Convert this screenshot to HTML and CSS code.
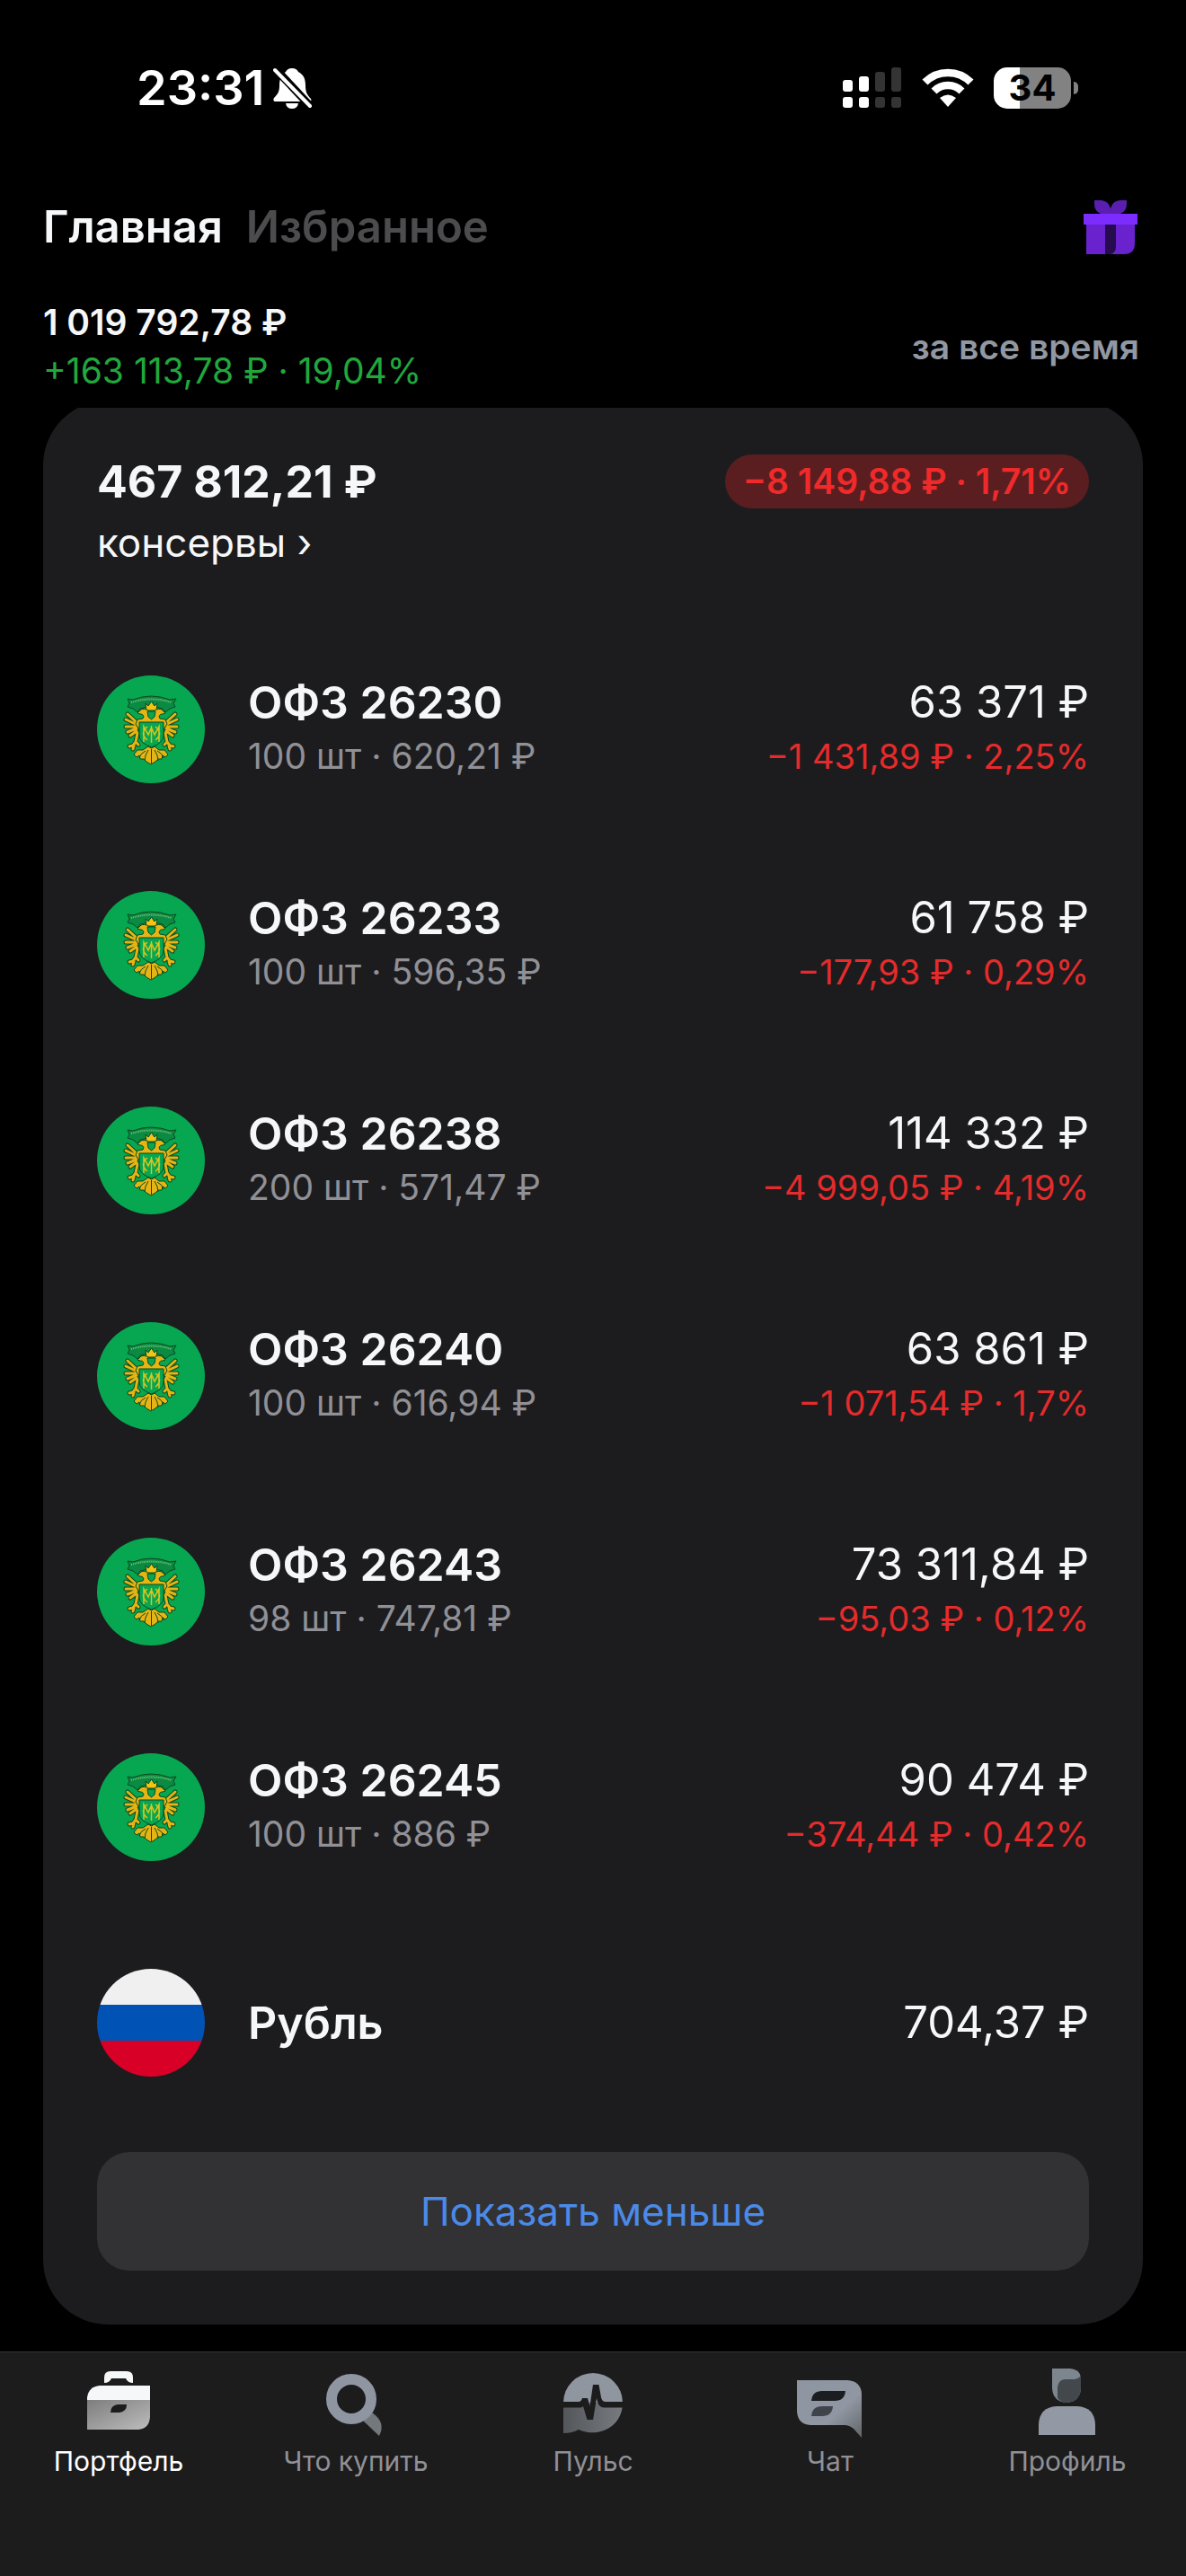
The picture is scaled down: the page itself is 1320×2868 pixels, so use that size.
FILE: index.html
```html
<!DOCTYPE html>
<html lang="ru">
<head>
<meta charset="utf-8">
<meta name="viewport" content="width=device-width, initial-scale=1">
<title>Портфель</title>
<link rel="stylesheet" href="styles.css">
</head>
<body>
<svg class="defs" aria-hidden="true">
  <symbol id="emblem" viewBox="0 0 120 120">
    <circle cx="60" cy="60" r="60" fill="#07a651"/>
    <g fill="none" stroke-linecap="round" stroke-linejoin="round">
      <path d="M46 54l-12-11M45 55l-13-6M44 57l-12 0M44 59l-10 4M44 62l-7 5M45 64l-2 10 3 3M43 74l-3 4-4 1M41 78l-1 4" stroke="#0a4a20" stroke-width="5"/>
      <path d="M46 54l-12-11M45 55l-13-6M44 57l-12 0M44 59l-10 4M44 62l-7 5M45 64l-2 10 3 3M43 74l-3 4-4 1M41 78l-1 4" stroke="#e6b414" stroke-width="3"/>
      <path d="M75 54l12-11M76 55l13-6M77 57l12 0M77 59l10 4M77 62l7 5M76 64l2 10-3 3M78 74l3 4 4 1M80 78l1 4" stroke="#0a4a20" stroke-width="5"/>
      <path d="M75 54l12-11M76 55l13-6M77 57l12 0M77 59l10 4M77 62l7 5M76 64l2 10-3 3M78 74l3 4 4 1M80 78l1 4" stroke="#e6b414" stroke-width="3"/>
    </g>
    <g stroke="#0a4a20" stroke-width="1" stroke-linejoin="round">
      <path d="M34 26l6 1q20-8 41 0l7-1-3 5 2 4-6 2-5 4-3-4q-12-4-25 0l-3 4-5-4-6-2 2-4z" fill="#0b8a43"/>
      <path d="M54 31l3 3 3.500-5 3.500 5 3-3-1 8H55z" fill="#f4c316"/>
      <path d="M43 54l2-5 6-1c2-3 0-5-3-5l-3-1 4-4c5-2 9 1 11.500 6 2.500-5 6.500-8 11.500-6l4 4-3 1c-3 0-5 2-3 5l6 1 2 5-3 5H46z" fill="#e6b414"/>
      <path d="M56 40h9l-1 6-3.500 3-3.500-3z" fill="#07a651"/>
      <path d="M57 79l3.500 2 3.500-2 5 4 6 0 4 5-3 3-3-2-1 4-4 0-3 3-5 3-5-3-3-3-4 0-1-4-3 2-3-3 4-5 6 0z" fill="#e6b414"/>
      <path d="M47 52h27v15q0 8-13.500 13Q47 75 47 67z" fill="#07a651"/>
      <path d="M60.500 82v16M57 83q-4 6-4 12M64 83q4 6 4 12M54 84q-6 3-7 8M67 84q6 3 7 8" fill="none"/>
    </g>
    <path d="M38 30q22-7 45 0" fill="none" stroke="#7cc576" stroke-width="2" stroke-dasharray="1 1"/>
    <path d="M52 74V57l5 9 3.500-8 3.500 8 5-9v17M60.500 56v19M56 57q-9 8 0 15M65 57q9 8 0 15" fill="none" stroke="#d9c51f" stroke-width="1.500"/>
  </symbol>
</svg>

<div class="app">
  <div class="status">
    <div class="status-side">
      <span class="clock">23:31</span>
      <svg class="bell" viewBox="0 0 44 46" aria-label="Без звука" role="img">
        <path d="M21 1c4 0 6 2 7 4 6 3 8 8 8 15 0 8 2 11 6 15 1 2 0 3-1 3H3c-3 0-3-2-2-4 5-5 6-8 6-14C7 13 9 8 14 5c1-2 3-4 7-4zM14 40h14q-1 6-7 6t-7-6z" fill="#fff"/>
        <path d="M1 0l43 46" stroke="#000" stroke-width="9"/>
        <path d="M2 3l39 40" stroke="#fff" stroke-width="4" stroke-linecap="round"/>
      </svg>
    </div>
    <div class="status-side">
      <svg class="signal" viewBox="0 0 66 46" aria-hidden="true">
        <g fill="#fff"><rect y="14" width="11" height="13" rx="3"/><rect x="18" y="10" width="11" height="17" rx="3"/><rect y="33" width="11" height="12" rx="3"/><rect x="18" y="33" width="11" height="12" rx="3"/></g>
        <g fill="#343434"><rect x="36" y="5" width="11" height="22" rx="3"/><rect x="54" width="11" height="27" rx="3"/><rect x="36" y="33" width="11" height="12" rx="3"/><rect x="54" y="33" width="11" height="12" rx="3"/></g>
      </svg>
      <svg class="wifi" viewBox="0 0 58 44" aria-hidden="true">
        <g fill="none" stroke="#fff" stroke-width="8.500"><path d="M3.500 15.500a36 36 0 0 1 51 0"/><path d="M13.500 25.500a22 22 0 0 1 31 0"/></g>
        <path d="M20 33q9-7 18 0l-9 10z" fill="#fff"/>
      </svg>
      <div class="battery"><span class="battery-level">34</span></div>
    </div>
  </div>

  <header class="top">
    <nav class="tabs">
      <a class="tab tab-active" href="#main">Главная</a>
      <a class="tab" href="#favorites">Избранное</a>
    </nav>
    <button class="gift" type="button" aria-label="Подарки">
      <svg viewBox="0 0 60 60">
        <path d="M12 0h8q8 1 10 9 2-8 10-9h8v4q0 8-7 11H19q-7-3-7-11z" fill="#5a1fb0"/>
        <path d="M3 27h54v21q0 12-12 12H3z" fill="#6a22cf"/>
        <path d="M24 27h12v24q0 8-6 9h-6z" fill="#260c4e"/>
        <path d="M0 15h60v12H0z" fill="#7d2cff"/>
      </svg>
    </button>
  </header>

  <section class="summary">
    <div>
      <div class="total">1 019 792,78 ₽</div>
      <div class="gain">+163 113,78 ₽ · 19,04%</div>
    </div>
    <div class="period">за все время</div>
  </section>

  <main class="scroll">
    <section class="card">
      <div class="card-head">
        <h1 class="card-total">467 812,21 ₽</h1>
        <span class="pill">−8 149,88 ₽ · 1,71%</span>
      </div>
      <a class="account" href="#account">консервы ›</a>
      <ul class="assets">
        <li class="asset"><svg class="logo" aria-hidden="true"><use href="#emblem"/></svg><div class="about"><div class="name">ОФЗ 26230</div><div class="sub">100 шт · 620,21 ₽</div></div><div class="worth"><div class="value">63 371 ₽</div><div class="loss">−1 431,89 ₽ · 2,25%</div></div></li>
        <li class="asset"><svg class="logo" aria-hidden="true"><use href="#emblem"/></svg><div class="about"><div class="name">ОФЗ 26233</div><div class="sub">100 шт · 596,35 ₽</div></div><div class="worth"><div class="value">61 758 ₽</div><div class="loss">−177,93 ₽ · 0,29%</div></div></li>
        <li class="asset"><svg class="logo" aria-hidden="true"><use href="#emblem"/></svg><div class="about"><div class="name">ОФЗ 26238</div><div class="sub">200 шт · 571,47 ₽</div></div><div class="worth"><div class="value">114 332 ₽</div><div class="loss">−4 999,05 ₽ · 4,19%</div></div></li>
        <li class="asset"><svg class="logo" aria-hidden="true"><use href="#emblem"/></svg><div class="about"><div class="name">ОФЗ 26240</div><div class="sub">100 шт · 616,94 ₽</div></div><div class="worth"><div class="value">63 861 ₽</div><div class="loss">−1 071,54 ₽ · 1,7%</div></div></li>
        <li class="asset"><svg class="logo" aria-hidden="true"><use href="#emblem"/></svg><div class="about"><div class="name">ОФЗ 26243</div><div class="sub">98 шт · 747,81 ₽</div></div><div class="worth"><div class="value">73 311,84 ₽</div><div class="loss">−95,03 ₽ · 0,12%</div></div></li>
        <li class="asset"><svg class="logo" aria-hidden="true"><use href="#emblem"/></svg><div class="about"><div class="name">ОФЗ 26245</div><div class="sub">100 шт · 886 ₽</div></div><div class="worth"><div class="value">90 474 ₽</div><div class="loss">−374,44 ₽ · 0,42%</div></div></li>
        <li class="asset"><span class="logo flag"></span><div class="about"><div class="name">Рубль</div></div><div class="worth"><div class="value">704,37 ₽</div></div></li>
      </ul>
      <button class="less" type="button">Показать меньше</button>
    </section>
  </main>

  <nav class="bottom">
    <a class="item item-active" href="#portfolio">
      <svg viewBox="0 0 96 80" aria-hidden="true">
        <defs><linearGradient id="bag" x1="0" y1="0" x2="1" y2="1"><stop offset="0" stop-color="#7d7d7e"/><stop offset="1" stop-color="#bdbdbe"/></linearGradient></defs>
        <path d="M32 17V11q0-7 7-7h18q7 0 7 7v6q-6 0-8-5H40q-2 5-8 5z" fill="#f6f7f8"/>
        <path d="M13 36V33q2-12 14-13h56v16z" fill="#f6f7f8"/>
        <path fill-rule="evenodd" d="M13 36h70v19q-1 13-13 14H13zM39 50h10q8-1 8-9H47q-8 1-8 9z" fill="url(#bag)"/>
      </svg>
      <span>Портфель</span>
    </a>
    <a class="item" href="#buy">
      <svg viewBox="0 0 96 80" aria-hidden="true">
        <path d="M56 59l10-9q16 11 8 26z" fill="#73787c"/>
        <circle cx="43" cy="35" r="22" fill="none" stroke="#8f96a2" stroke-width="12"/>
      </svg>
      <span>Что купить</span>
    </a>
    <a class="item" href="#pulse">
      <svg viewBox="0 0 96 80" aria-hidden="true">
        <defs><linearGradient id="low" x1="0" y1="0" x2="1" y2="0"><stop offset="0" stop-color="#54575a"/><stop offset="1" stop-color="#777a7f"/></linearGradient></defs>
        <path d="M15 39a33 33 0 0 1 66 0z" fill="#8f96a0"/>
        <path d="M15 39h66c0 27-27 40-49 30q-7 4-17 4z" fill="url(#low)"/>
        <path d="M14 38h18q3 0 4-4h6l2.500 9L48 19h6.500L57 33q1 5 5 5h20v6.500H60q-5 0-7-6.500l-1-4-4 24h-6.500L37 43q-1 1.500-5 1.500H14z" fill="#1c1c1d"/>
      </svg>
      <span>Пульс</span>
    </a>
    <a class="item" href="#chat">
      <svg viewBox="0 0 96 80" aria-hidden="true">
        <defs><linearGradient id="bub" x1="0" y1="0" x2="1" y2="1"><stop offset="0" stop-color="#8d95a0"/><stop offset=".6" stop-color="#9097a2"/><stop offset="1" stop-color="#626569"/></linearGradient></defs>
        <path d="M11 14h56q15 1 16 15v49L74 68q-5-4-10-4H26q-14-1-15-15z" fill="url(#bub)"/>
        <path d="M27 37q1-11 12-11h26q-1 11-12 11z" fill="#1c1d20"/>
        <path d="M27 54q1-11 12-11h12q-1 11-12 11z" fill="#3f444b"/>
      </svg>
      <span>Чат</span>
    </a>
    <a class="item" href="#profile">
      <svg viewBox="0 0 96 80" aria-hidden="true">
        <path d="M31 1h20q12 1 12 12v10q-1 15-16 16-15-1-16-16z" fill="#7d868f"/>
        <path d="M37 34V22q1-9 9-9h10q6-1 7-5v15q-1 15-16 16-6 0-10-5z" fill="#43484c"/>
        <path d="M16 75V63q1-19 20-20h23q19 1 20 20v12z" fill="#9299a4"/>
      </svg>
      <span>Профиль</span>
    </a>
  </nav>
</div>
</body>
</html>
```

FILE: styles.css
```css
* {
  box-sizing: border-box;
}

body {
  margin: 0;
  background: #000;
  color: #f6f7f8;
  font-family: Inter, "Liberation Sans", sans-serif;
}

a {
  color: inherit;
  text-decoration: none;
}

button {
  border: 0;
  padding: 0;
  background: none;
  font-family: inherit;
}

svg {
  display: block;
}

.defs {
  position: absolute;
  width: 0;
  height: 0;
}

.app {
  display: flex;
  flex-direction: column;
  min-height: 100vh;
}

/* Status bar */

.status {
  display: flex;
  align-items: center;
  justify-content: space-between;
  height: 196px;
  padding: 0 120px 0 152px;
}

.status-side {
  display: flex;
  align-items: center;
}

.clock {
  font-size: 54px;
  font-weight: 600;
  line-height: 60px;
  color: #fff;
}

.bell {
  width: 44px;
  height: 46px;
  margin-left: 10px;
}

.signal {
  width: 66px;
  height: 46px;
}

.wifi {
  width: 58px;
  height: 44px;
  margin: 0 22px;
}

.battery {
  position: relative;
  padding-right: 8px;
}

.battery::after {
  content: "";
  position: absolute;
  right: 0;
  top: 16px;
  width: 5px;
  height: 14px;
  border-radius: 0 5px 5px 0;
  background: #828282;
}

.battery-level {
  display: block;
  width: 86px;
  border-radius: 15px;
  background: linear-gradient(to right, #fff 34%, #828282 34%);
  color: #000;
  font-size: 40px;
  font-weight: 700;
  line-height: 46px;
  text-align: center;
}

/* Header */

.top {
  display: flex;
  align-items: center;
  justify-content: space-between;
  height: 114px;
  padding: 0 54px 0 48px;
}

.tabs {
  display: flex;
  gap: 26px;
}

.tab {
  font-size: 49px;
  font-weight: 600;
  line-height: 60px;
  color: #4c4c4e;
}

.tab-active {
  color: #f6f7f8;
}

.gift {
  width: 60px;
  height: 60px;
}

.summary {
  display: flex;
  align-items: center;
  justify-content: space-between;
  padding: 22px 52px 14px 48px;
  font-size: 39px;
  line-height: 54px;
}

.total {
  font-weight: 600;
}

.gain {
  color: #21a83c;
}

.period {
  font-weight: 600;
  color: #9298a1;
}

/* Account card, its top edge slides under the header */

.scroll {
  overflow: hidden;
  padding: 0 48px 30px;
}

.card {
  margin-top: -8px;
  padding: 60px;
  border-radius: 72px;
  background: #1c1c1e;
}

.card-head {
  display: flex;
  align-items: center;
  justify-content: space-between;
}

.card-total {
  margin: 0;
  font-size: 50px;
  font-weight: 700;
  line-height: 60px;
}

.pill {
  padding: 0 20px;
  border-radius: 30px;
  background: #5a1e20;
  color: #f02a2a;
  font-size: 39px;
  font-weight: 600;
  line-height: 60px;
}

.account {
  display: block;
  margin-top: 8px;
  font-size: 44px;
  line-height: 60px;
}

.assets {
  margin: 58px 0 24px;
  padding: 0;
  list-style: none;
}

.asset {
  display: flex;
  align-items: center;
  height: 240px;
}

.logo {
  flex: none;
  width: 120px;
  height: 120px;
  margin-right: 48px;
}

.flag {
  border-radius: 50%;
  background: linear-gradient(#f0f0f0 33%, #0052b4 33% 67%, #d80027 67%);
}

.about {
  flex: 1;
}

.worth {
  text-align: right;
}

.name,
.value {
  line-height: 60px;
}

.name {
  font-size: 50px;
  font-weight: 600;
}

.value {
  font-size: 49px;
}

.sub,
.loss {
  line-height: 60px;
}

.sub {
  font-size: 39px;
  color: #909096;
}

.loss {
  font-size: 38px;
  color: #e52b2b;
}

.less {
  width: 100%;
  border-radius: 36px;
  background: #323234;
  color: #4b8ae8;
  font-size: 44px;
  line-height: 132px;
}

/* Bottom navigation */

.bottom {
  display: flex;
  height: 250px;
  margin-top: auto;
  padding-top: 17px;
  border-top: 1px solid #343435;
  background: #1c1c1c;
}

.item {
  flex: 1;
  display: flex;
  flex-direction: column;
  align-items: center;
  gap: 6px;
  color: #909096;
  font-size: 30px;
  line-height: 36px;
}

.item svg {
  width: 96px;
  height: 80px;
}

.item-active {
  color: #fff;
}
```
